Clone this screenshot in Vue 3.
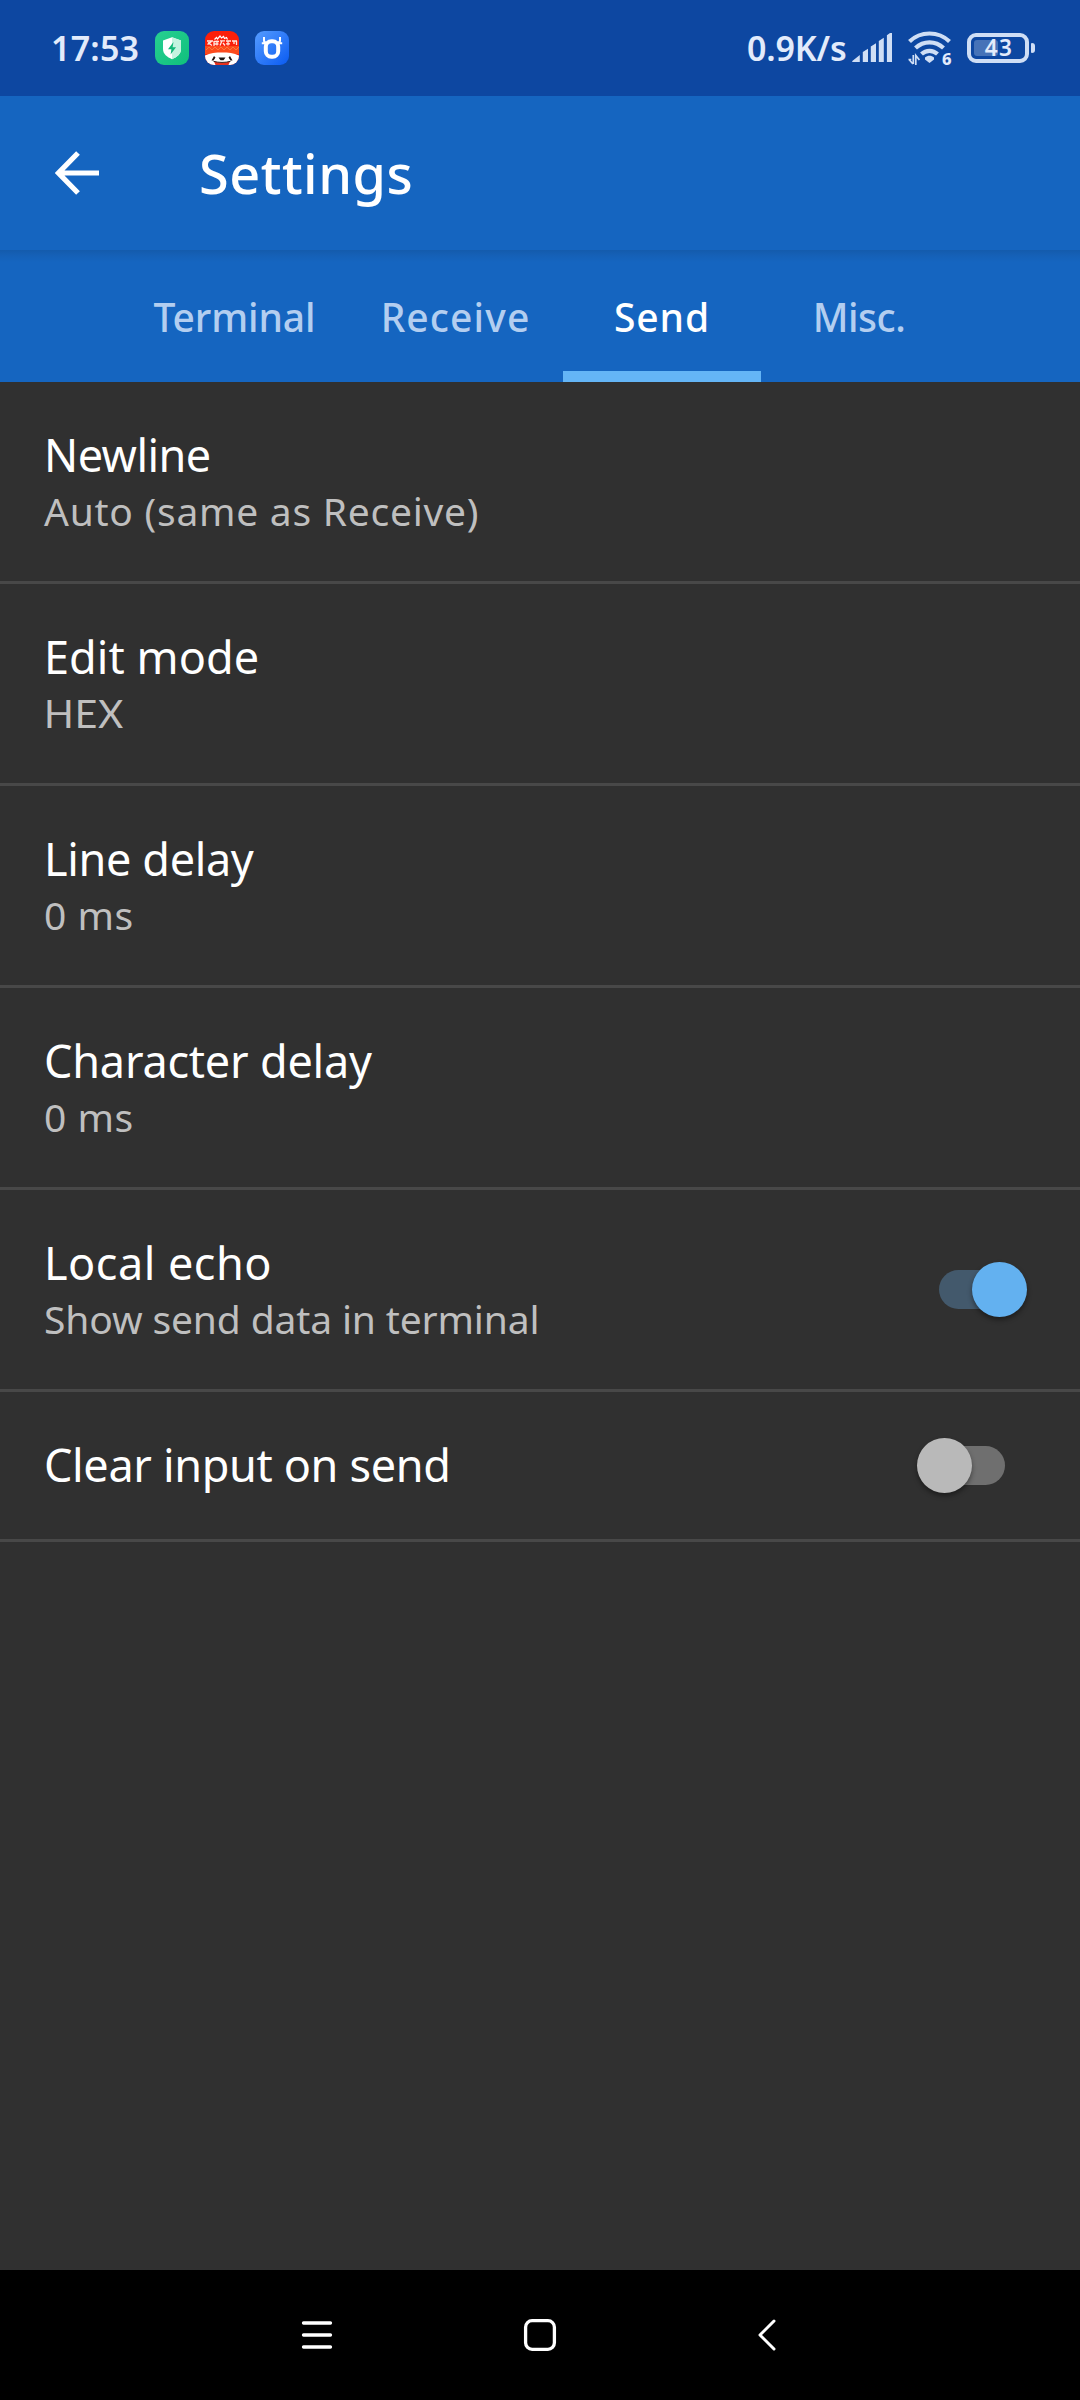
<script setup>
import { ref } from 'vue'

const tabs = [
  { label: 'Terminal', width: 227, spacing: -0.1 },
  { label: 'Receive', width: 215, spacing: 1.1 },
  { label: 'Send', width: 198, spacing: 0.9 },
  { label: 'Misc.', width: 196, spacing: -0.5 },
]
const activeTab = ref('Send')

const settings = ref([
  { title: 'Newline', spacing: -0.55, summary: 'Auto (same as Receive)', summarySpacing: 0.74 },
  { title: 'Edit mode', spacing: 0.05, summary: 'HEX', summarySpacing: 0.85, code: true },
  { title: 'Line delay', spacing: -0.35, summary: '0 ms', summarySpacing: 0.5 },
  { title: 'Character delay', spacing: -0.2, summary: '0 ms', summarySpacing: 0.5 },
  { title: 'Local echo', spacing: 0.5, summary: 'Show send data in terminal', summarySpacing: -0.14, on: true },
  { title: 'Clear input on send', spacing: -0.34, on: false },
])
</script>

<template>
  <div class="screen">
    <header class="status">
      <span class="clock">17:53</span>
      <div class="apps">
        <svg width="34" height="34" viewBox="0 0 34 34">
          <defs>
            <linearGradient id="g-green" x1="0" y1="0" x2="1" y2="1">
              <stop offset="0" stop-color="#27cf91" /><stop offset="1" stop-color="#10c07c" />
            </linearGradient>
          </defs>
          <rect width="34" height="34" rx="9" fill="url(#g-green)" />
          <path d="M17 6.200 26 9.600V18c0 5-4 8-9 10.200C12 26 8 23 8 18V9.600z" fill="#fff" />
          <path d="M17 6.200 26 9.600V18c0 5-4 8-9 10.200z" fill="#c5f3e0" />
          <path d="M18.500 11 13 18.200h3.400L15.600 23.500 21 16.200h-3.400z" fill="#13b879" />
        </svg>
        <svg width="34" height="34" viewBox="0 0 34 34">
          <defs><clipPath id="c-red"><rect width="34" height="34" rx="9" /></clipPath></defs>
          <g clip-path="url(#c-red)">
            <rect width="34" height="34" fill="#fb1f0a" />
            <path d="M0 15h34v8H0z" fill="#fc4a1c" />
            <path d="M1 19l3-3 3 3 3-3 3 3 3-3 3 3 3-3 3 3 3-3 3 3 3-3" fill="none" stroke="#fd7a3a" stroke-width="1" />
            <path d="M9.500 8.500l2-2 1 1.500 2.500-3 1.500 2 2-1.500 1 2 2-1 1 2" fill="none" stroke="#fff" stroke-width="1.200" />
            <path d="M2 10h6M2.500 13.500l4-3M3 11.500l4 3M9 10v5M9 10.500h5M9.500 13h4M12 9.500v5M15 9.800h5M17 9.800l-2 4.700M18 12l2 2.500M21 10h5M23 10v4.500M21 12.800h4M27 10h5M29 10v3M31.500 10v4" fill="none" stroke="#ffe9de" stroke-width="1.300" />
            <path d="M0 24.500c5-2.500 11-3 17-3s12 .5 17 3V34H0z" fill="#fff" />
            <path d="M6.500 29.500l2.500-4.500 1.500 1.500-2 3zM27.500 29.500 25 25l-1.500 1.500 2 3z" fill="#221411" />
            <path d="M13.500 26.500h7l-2 2.700h-3z" fill="#1d1715" />
            <path d="M9 30.500c5 1.500 11 1.500 16 0L23.500 34h-13z" fill="#e6301f" />
            <path d="M8.500 30.300c5.500 1.500 11.500 1.500 17 0" fill="none" stroke="#392019" stroke-width="1" />
          </g>
        </svg>
        <svg width="34" height="34" viewBox="0 0 34 34">
          <defs>
            <linearGradient id="g-blue" x1="0" y1="0" x2="1" y2="1">
              <stop offset="0" stop-color="#559cff" /><stop offset="1" stop-color="#0a5bf2" />
            </linearGradient>
          </defs>
          <rect width="34" height="34" rx="9" fill="url(#g-blue)" />
          <rect x="10.800" y="10.300" width="12.400" height="15.400" rx="5.500" fill="none" stroke="#fff" stroke-width="4" />
          <path d="M9 6v3.500c0 1.300.8 2 2.200 2M25 6v3.500c0 1.300-.8 2-2.200 2M6.800 12.200h5M22.200 12.200h5" fill="none" stroke="#fff" stroke-width="2" />
        </svg>
      </div>
      <div class="indicators">
        <span class="speed">0.9K/s</span>
        <svg class="signal" width="41" height="30" viewBox="0 0 41 30" fill="#cfdef5">
          <path d="M0 28.200 7.800 22V29H1Q0 29 0 28.200zM10.800 19l5.200-3.200V29h-5.200zM18.800 13.500l5.200-3.300V29h-5.200zM26.800 8l5-3.300V29h-5zM34.900 2.200 38 0h2v29h-5.100z" />
        </svg>
        <svg class="wifi" width="44" height="36" viewBox="0 0 44 36">
          <g fill="none" stroke="#cfdef5" stroke-width="4.200">
            <path d="M1.500 10.500C12.500-.2 30.500-.2 41.500 10.500" />
            <path d="M7.500 17c8-7.600 20-7.600 28 0" />
            <path d="M13.500 23c4.600-4.300 11.400-4.300 16 0" />
          </g>
          <path d="M17 26.500c2.500-2.200 6.500-2.200 9 0v2L21.500 32 17 28.500z" fill="#cfdef5" />
          <path d="M.5 28.500h2.800M5.300 24v9M1 28.500 5 33M7.800 34v-9.500l3.600 4.500" fill="none" stroke="#cfdef5" stroke-width="1.700" />
          <text x="34" y="33.500" class="gen">6</text>
        </svg>
        <div class="battery">
          <div class="cell"><i></i><b>43</b></div>
          <em></em>
        </div>
      </div>
    </header>

    <div class="appbar">
      <svg class="back" width="44" height="44" viewBox="0 0 44 44">
        <path d="M23 2 3.500 22 23 42M4 22h40" fill="none" stroke="#fff" stroke-width="5.200" />
      </svg>
      <h1>Settings</h1>
    </div>

    <nav class="tabs">
      <button
        v-for="tab in tabs"
        :key="tab.label"
        class="tab"
        :class="{ active: tab.label === activeTab }"
        :style="{ width: tab.width + 'px', letterSpacing: tab.spacing + 'px' }"
        @click="activeTab = tab.label"
      >{{ tab.label }}</button>
    </nav>

    <main class="list">
      <section v-for="item in settings" :key="item.title" class="row" :class="{ single: !item.summary }">
        <div class="texts">
          <div class="title" :style="{ letterSpacing: item.spacing + 'px' }">{{ item.title }}</div>
          <div
            v-if="item.summary"
            class="summary"
            :class="{ code: item.code }"
            :style="{ letterSpacing: item.summarySpacing + 'px' }"
          >{{ item.summary }}</div>
        </div>
        <div v-if="item.on !== undefined" class="switch" :class="{ on: item.on }" @click="item.on = !item.on">
          <div class="track"></div>
          <div class="thumb"></div>
        </div>
      </section>
    </main>

    <footer class="navbar">
      <svg width="32" height="34" viewBox="0 0 32 34">
        <path d="M2.500 5h27M2.500 17h27M2.500 29h27" stroke="#fff" stroke-width="3.300" stroke-linecap="round" />
      </svg>
      <svg width="34" height="34" viewBox="0 0 34 34">
        <rect x="2.600" y="2.700" width="28.800" height="28.600" rx="6.500" fill="none" stroke="#fff" stroke-width="3.300" />
      </svg>
      <svg width="20" height="34" viewBox="0 0 20 34">
        <path d="M17 3 3 17l14 14" fill="none" stroke="#fff" stroke-width="3" stroke-linecap="round" stroke-linejoin="round" />
      </svg>
    </footer>
  </div>
</template>

<style>
body { background: #303030; }
</style>

<style scoped>
.screen {
  width: 1080px;
  height: 2400px;
  display: flex;
  flex-direction: column;
  background: #303030;
  color: #fff;
  font-family: "Noto Sans", "Open Sans", sans-serif;
  overflow: hidden;
}
.status {
  height: 96px;
  flex: none;
  box-sizing: border-box;
  padding-left: 51px;
  padding-right: 45px;
  display: flex;
  align-items: center;
  background: #0d47a1;
}
.clock {
  width: 104px;
  font-size: 34px;
  font-weight: 600;
  letter-spacing: 0.2px;
  color: #e2ebfb;
}
.apps { display: flex; gap: 16px; }
.indicators { margin-left: auto; display: flex; align-items: center; }
.speed {
  width: 105px;
  font-size: 34px;
  font-weight: 600;
  letter-spacing: -0.17px;
  color: #e2ebfb;
  white-space: nowrap;
}
.signal { margin-right: 15px; }
.wifi { margin-right: 15px; margin-top: 2px; overflow: visible; }
.gen { font-size: 16.500px; font-weight: 800; fill: #e2ebfb; }
.battery { display: flex; align-items: center; gap: 2px; }
.cell {
  box-sizing: border-box;
  width: 62px;
  height: 30px;
  border: 4px solid #cfdef5;
  border-radius: 9px;
  padding: 3px;
  display: grid;
  align-items: center;
}
.cell i, .cell b { grid-area: 1 / 1; }
.cell i { width: 24px; height: 16px; border-radius: 3px; background: #4673b8; }
.cell b {
  font-size: 22.500px;
  line-height: 16px;
  font-weight: 600;
  letter-spacing: 1.500px;
  padding-left: 2px;
  color: #e2ebfb;
  text-align: center;
}
.battery em { width: 4px; height: 10px; border-radius: 1px 3px 3px 1px; background: #cfdef5; }

.appbar {
  height: 154px;
  flex: none;
  display: flex;
  align-items: center;
  padding-left: 55px;
  background: #1565c0;
}
.appbar h1 {
  margin: 0 0 0 100px;
  font-size: 54px;
  font-weight: 500;
  letter-spacing: 0.500px;
}
.tabs {
  height: 132px;
  flex: none;
  box-sizing: border-box;
  padding-left: 121px;
  display: flex;
  background: linear-gradient(#145bac, #1560b6 5px, #1565c0 12px);
}
.tab {
  box-sizing: border-box;
  height: 132px;
  padding: 0;
  border: 0;
  border-top: 11px solid transparent;
  border-bottom: 11px solid transparent;
  background: none;
  font: 500 39px "Noto Sans", "Open Sans", sans-serif;
  color: #b3cef0;
}
.tab.active { color: #fff; border-bottom-color: #64b5f6; border-top: 0; padding-top: 11px; }

.list { flex: 1; }
.row {
  box-sizing: border-box;
  height: 202px;
  border-bottom: 3px solid #484848;
  padding: 0 53px 0 44px;
  display: flex;
  justify-content: space-between;
  align-items: center;
}
.row.single { height: 150px; }
.texts { align-self: flex-start; padding-top: 48px; white-space: nowrap; }
.title { font-size: 45px; line-height: 50px; }
.summary { margin-top: 6px; font-size: 39px; line-height: 50px; color: #bfbfbf; }
.summary.code { font-family: "Lato", "Noto Sans", sans-serif; }

.switch { width: 110px; height: 56px; margin-bottom: 1px; display: grid; align-items: center; }
.track, .thumb { grid-area: 1 / 1; }
.track { justify-self: center; width: 66px; height: 39px; border-radius: 20px; background: #6f6f6f; }
.thumb {
  justify-self: start;
  width: 55px;
  height: 55px;
  border-radius: 50%;
  background: #b9b9b9;
  box-shadow: 0 3px 5px rgba(0, 0, 0, 0.4);
}
.on .track { background: #43596c; }
.on .thumb { justify-self: end; background: #63b1f0; }

.navbar {
  height: 130px;
  flex: none;
  display: flex;
  align-items: center;
  background: #000;
  padding-left: 301px;
}
.navbar svg + svg { margin-left: 190px; }
.navbar svg:last-child { margin-left: 200px; }
</style>
